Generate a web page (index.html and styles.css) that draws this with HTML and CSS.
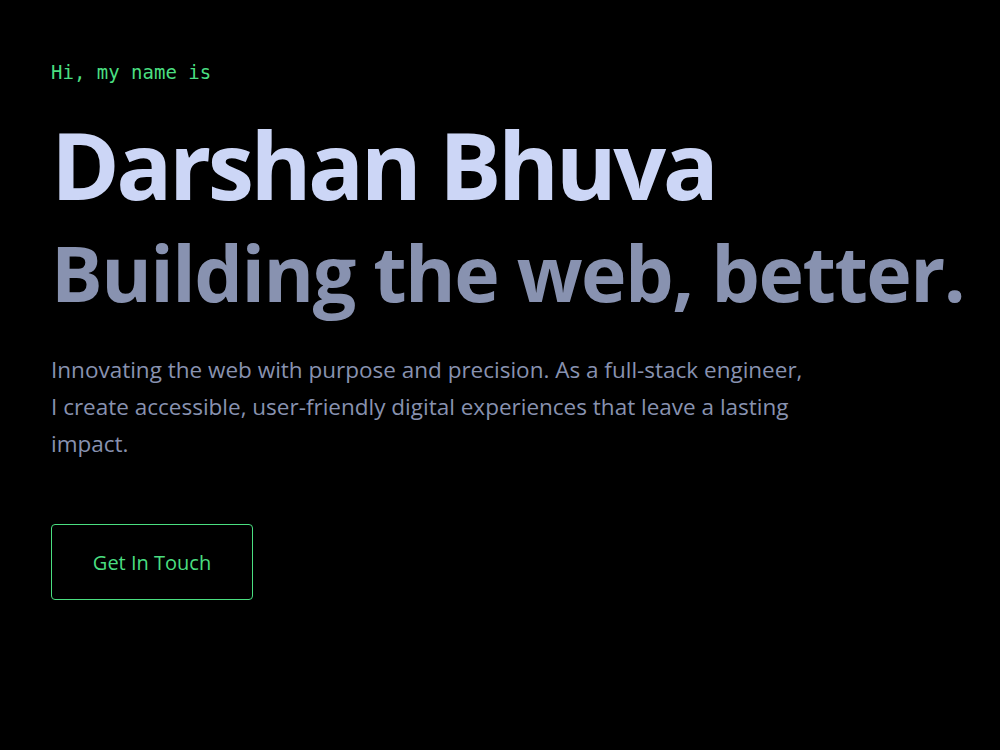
FILE: index.html
```html
<!DOCTYPE html>
<html lang="en">

<head>
    <meta charset="UTF-8">
    <meta name="viewport" content="width=device-width, initial-scale=1.0">
    <title>Darshan Bhuva</title>
    <link rel="stylesheet" href="styles.css">
</head>

<body>
    <section class="hero">
        <p class="intro">Hi, my name is</p>
        <h1 class="name">Darshan Bhuva</h1>
        <h2 class="tagline">Building the web, better.</h2>
        <p class="about">Innovating the web with purpose and precision. As a full-stack engineer, I create accessible, user-friendly digital experiences that leave a lasting impact.</p>
        <a href="#contact" class="contactBtn">Get In Touch</a>
    </section>
</body>

</html>
```

FILE: styles.css
```css
html {
font-family: "Open Sans", "Noto Sans", sans-serif;
}

body {
margin: 0;
background-color: #000;
min-height: 100vh;
}

.hero {
display: flex;
flex-direction: column;
align-items: flex-start;
padding: 62px 51px 0;
}

.intro {
font-family: "DejaVu Sans Mono", monospace;
font-size: 19px;
line-height: 20px;
color: #4ade80;
margin: 0 0 36px;
}

.name {
font-size: 93px;
font-weight: 700;
line-height: 93px;
color: #ccd6f6;
margin: 0;
letter-spacing: -3.5px;
}

.tagline {
font-size: 77px;
font-weight: 700;
line-height: 85px;
color: #8892b0;
margin: 19px 0 0;
letter-spacing: -1.5px;
white-space: nowrap;
}

.about {
font-size: 22.5px;
line-height: 37px;
color: #8892b0;
max-width: 756px;
margin: 36px 0 0;
}

.contactBtn {
display: flex;
align-items: center;
justify-content: center;
width: 202px;
height: 76px;
box-sizing: border-box;
margin-top: 62px;
border: 1px solid #4ade80;
border-radius: 4px;
color: #4ade80;
font-size: 20px;
text-decoration: none;
}
```
